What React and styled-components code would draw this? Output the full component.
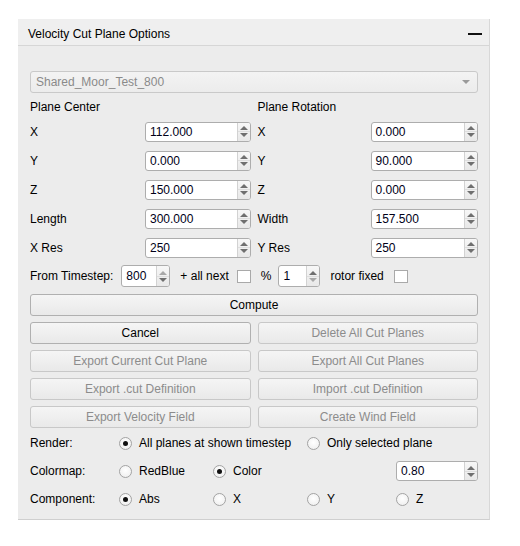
import React from 'react';
import styled, { createGlobalStyle } from 'styled-components';

const GlobalStyle = createGlobalStyle`
  body {
    margin: 0;
    background: #ffffff;
    font-family: "Liberation Sans", Arial, sans-serif;
    font-size: 12px;
    color: #000;
  }
`;

const Page = styled.div`
  padding: 19px 0 27px 18px;
`;

const Panel = styled.div`
  width: 472px;
  box-sizing: border-box;
  background: #ececec;
  border-right: 1px solid #d8d8d8;
  border-bottom: 1px solid #cfcfcf;
`;

const Header = styled.div`
  height: 27px;
  box-sizing: border-box;
  display: flex;
  align-items: center;
  justify-content: space-between;
  padding: 3px 7px 0 10px;
  background: #efefef;
  border-bottom: 1px solid #d6d6d6;
`;

const Minus = styled.div`
  width: 14px;
  height: 2px;
  background: #111;
`;

const Body = styled.div`
  padding: 25px 11px 6px 12px;
  display: flex;
  flex-direction: column;
`;

const Combo = styled.div`
  height: 22px;
  box-sizing: border-box;
  border: 1px solid #c9c9c9;
  border-radius: 3px;
  background: linear-gradient(#f3f3f3, #ececec);
  color: #8a8a8a;
  display: flex;
  align-items: center;
  justify-content: space-between;
  padding: 0 7px 0 5px;
`;

const Caret = styled.div`
  width: 0;
  height: 0;
  border-left: 4px solid transparent;
  border-right: 4px solid transparent;
  border-top: 4px solid #9a9a9a;
`;

const Halves = styled.div`
  display: grid;
  grid-template-columns: 1fr 1fr;
  column-gap: 7px;
  margin-top: ${p => p.$top || 0}px;
`;

const Heading = styled.div`
  height: 20px;
  line-height: 20px;
`;

const Fields = styled.div`
  display: grid;
  grid-template-columns: ${p => p.$label}px 1fr;
  grid-auto-rows: 29px;
  align-items: center;
`;

const Spin = styled.div`
  display: flex;
  height: ${p => p.$h || 20}px;
  width: ${p => (p.$w ? `${p.$w}px` : 'auto')};
  box-sizing: border-box;
  border: 1px solid #adadad;
  border-radius: 3px;
  background: #fff;
  overflow: hidden;
  grid-column: ${p => p.$col || 'auto'};
`;

const SpinText = styled.div`
  flex: 1;
  display: flex;
  align-items: center;
  padding-left: 4px;
  color: #000018;
`;

const SpinButtons = styled.div`
  width: 12px;
  border-left: 1px solid #d2d2d2;
  background: linear-gradient(#f7f7f7, #e8e8e8);
  display: flex;
  flex-direction: column;
`;

const SpinHalf = styled.div`
  flex: 1;
  display: flex;
  align-items: ${p => (p.$up ? 'flex-end' : 'flex-start')};
  justify-content: center;
  padding: ${p => (p.$up ? '0 0 1px' : '1px 0 0')};
  & + & {
    border-top: 1px solid #dedede;
  }
`;

const Tri = styled.div`
  width: 0;
  height: 0;
  border-left: 4px solid transparent;
  border-right: 4px solid transparent;
  ${p => (p.$up ? 'border-bottom' : 'border-top')}: 4px solid ${p => (p.$dim ? '#a8a8a8' : '#6f6f6f')};
`;

const TimeRow = styled.div`
  height: 28px;
  display: flex;
  align-items: center;
`;

const Text = styled.span`
  margin-left: ${p => p.$ml || 0}px;
  white-space: nowrap;
`;

const Check = styled.div`
  width: 14px;
  height: 13px;
  box-sizing: border-box;
  border: 1px solid #a9a9a9;
  background: #fff;
  margin-left: ${p => p.$ml || 0}px;
`;

const Buttons = styled.div`
  margin-top: 4px;
  display: grid;
  grid-template-columns: 1fr 1fr;
  column-gap: 7px;
  row-gap: 6px;
`;

const Button = styled.div`
  height: 22px;
  box-sizing: border-box;
  display: flex;
  align-items: center;
  justify-content: center;
  border: 1px solid ${p => (p.$disabled ? '#c8c8c8' : '#b0b0b0')};
  border-radius: 3px;
  background: linear-gradient(#f5f5f5, #e9e9e9);
  color: ${p => (p.$disabled ? '#8c8c8c' : '#000')};
  grid-column: ${p => (p.$wide ? '1 / -1' : 'auto')};
`;

const Options = styled.div`
  margin-top: 1px;
  display: grid;
  grid-template-columns: 89px 94px 94px 89px 1fr;
  grid-auto-rows: 28px;
  align-items: center;
`;

const Option = styled.div`
  display: flex;
  align-items: center;
  gap: 7px;
  white-space: nowrap;
  grid-column: ${p => (p.$span ? `span ${p.$span}` : 'auto')};
`;

const Radio = styled.div`
  width: 13px;
  height: 13px;
  box-sizing: border-box;
  border-radius: 50%;
  border: 1px solid #a3a3a3;
  background: radial-gradient(circle at 50% 40%, #ffffff, #ececec);
  display: flex;
  align-items: center;
  justify-content: center;
  &::after {
    content: '';
    width: 5px;
    height: 5px;
    border-radius: 50%;
    background: ${p => (p.$on ? '#111' : 'transparent')};
  }
`;

function SpinBox({ value, h, w, col, dimUp, dimDown }) {
  return (
    <Spin $h={h} $w={w} $col={col}>
      <SpinText>{value}</SpinText>
      <SpinButtons>
        <SpinHalf $up>
          <Tri $up $dim={dimUp} />
        </SpinHalf>
        <SpinHalf>
          <Tri $dim={dimDown} />
        </SpinHalf>
      </SpinButtons>
    </Spin>
  );
}

function Choice({ label, on, span }) {
  return (
    <Option $span={span}>
      <Radio $on={on} />
      <span>{label}</span>
    </Option>
  );
}

const center = [
  ['X', '112.000'],
  ['Y', '0.000'],
  ['Z', '150.000'],
  ['Length', '300.000'],
  ['X Res', '250'],
];

const rotation = [
  ['X', '0.000'],
  ['Y', '90.000'],
  ['Z', '0.000'],
  ['Width', '157.500'],
  ['Y Res', '250'],
];

const actions = [
  ['Cancel', false],
  ['Delete All Cut Planes', true],
  ['Export Current Cut Plane', true],
  ['Export All Cut Planes', true],
  ['Export .cut Definition', true],
  ['Import .cut Definition', true],
  ['Export Velocity Field', true],
  ['Create Wind Field', true],
];

export default function App() {
  return (
    <Page>
      <GlobalStyle />
      <Panel>
        <Header>
          <span>Velocity Cut Plane Options</span>
          <Minus />
        </Header>
        <Body>
          <Combo>
            <span>Shared_Moor_Test_800</span>
            <Caret />
          </Combo>

          <Halves $top={4}>
            <Heading>Plane Center</Heading>
            <Heading>Plane Rotation</Heading>
          </Halves>

          <Halves>
            <Fields $label={115}>
              {center.map(([label, value]) => (
                <React.Fragment key={label}>
                  <span>{label}</span>
                  <SpinBox value={value} />
                </React.Fragment>
              ))}
            </Fields>
            <Fields $label={113}>
              {rotation.map(([label, value]) => (
                <React.Fragment key={label}>
                  <span>{label}</span>
                  <SpinBox value={value} />
                </React.Fragment>
              ))}
            </Fields>
          </Halves>

          <TimeRow>
            <Text>From Timestep:</Text>
            <Text $ml={8}>
              <SpinBox value="800" h={22} w={49} dimUp />
            </Text>
            <Text $ml={10}>+ all next</Text>
            <Check $ml={8} />
            <Text $ml={10}>%</Text>
            <Text $ml={7}>
              <SpinBox value="1" h={22} w={42} dimDown />
            </Text>
            <Text $ml={10}>rotor fixed</Text>
            <Check $ml={10} />
          </TimeRow>

          <Buttons>
            <Button $wide>Compute</Button>
            {actions.map(([label, disabled]) => (
              <Button key={label} $disabled={disabled}>
                {label}
              </Button>
            ))}
          </Buttons>

          <Options>
            <span>Render:</span>
            <Choice label="All planes at shown timestep" on span={2} />
            <Choice label="Only selected plane" span={2} />

            <span>Colormap:</span>
            <Choice label="RedBlue" />
            <Choice label="Color" on />
            <span />
            <SpinBox value="0.80" />

            <span>Component:</span>
            <Choice label="Abs" on />
            <Choice label="X" />
            <Choice label="Y" />
            <Choice label="Z" />
          </Options>
        </Body>
      </Panel>
    </Page>
  );
}
